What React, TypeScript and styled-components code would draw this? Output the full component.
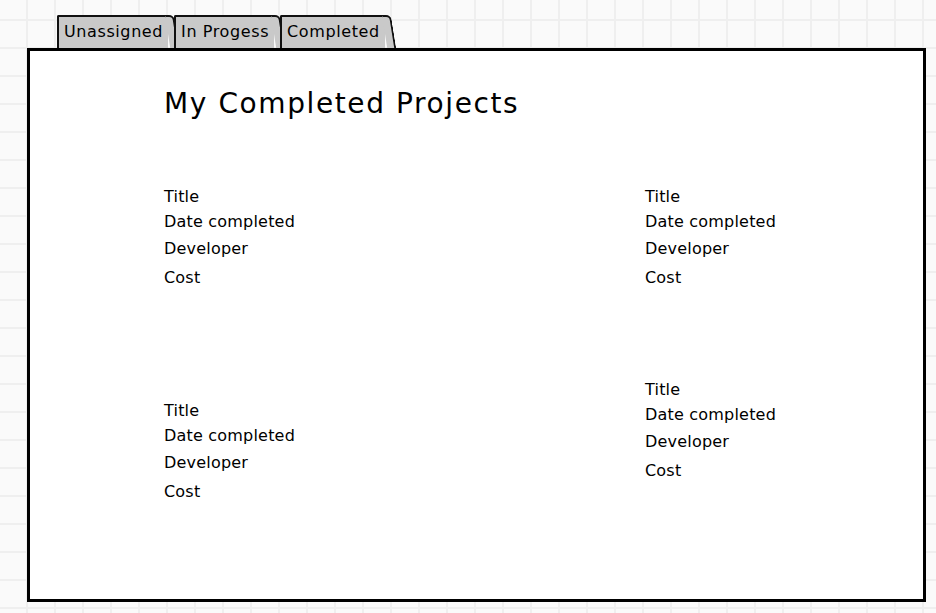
import React from "react";
import styled, { createGlobalStyle } from "styled-components";

const GlobalStyle = createGlobalStyle`
  html, body {
    margin: 0;
    padding: 0;
  }
  body {
    width: 936px;
    height: 613px;
    overflow: hidden;
    background-color: #fafafa;
    background-image:
      linear-gradient(to right, #efefef 2px, transparent 2px),
      linear-gradient(to bottom, #efefef 2px, transparent 2px);
    background-size: 28px 28px;
    background-position: 26px 19px;
    font-family: "DejaVu Sans", "Liberation Sans", sans-serif;
    color: #000;
  }
`;

const Page = styled.div`
  display: flex;
  flex-direction: column;
  padding: 15px 0 0 27px;
`;

const TabBar = styled.div`
  display: flex;
  gap: 2px;
  padding-left: 30px;
  height: 34px;
`;

const Tab = styled.div`
  position: relative;
  display: flex;
  align-items: center;
  height: 100%;
  box-sizing: border-box;
  padding: 0 5px 3px 5px;
  margin-right: 4px;
  background: #c9c9c9;
  border-left: 2px solid #111;
  border-top: 2px solid #111;
  border-top-left-radius: 2px;
  font-size: 16px;
  letter-spacing: 0.6px;
  white-space: nowrap;

  &::after {
    content: "";
    position: absolute;
    top: -2px;
    bottom: 0;
    right: -6px;
    width: 7px;
    background: #c9c9c9;
    border-top: 2px solid #111;
    border-right: 2px solid #111;
    border-top-right-radius: 5px;
    transform: skewX(9deg);
    transform-origin: top left;
  }
`;

const Panel = styled.div`
  position: relative;
  width: 899px;
  height: 554px;
  box-sizing: border-box;
  margin-top: -1px;
  background: #fff;
  border: 3px solid #000;
  padding: 33px 0 0 134px;
`;

const Heading = styled.h1`
  margin: 0;
  font-size: 28px;
  font-weight: 400;
  line-height: 40px;
  letter-spacing: 1.6px;
`;

const CardGrid = styled.div`
  display: grid;
  grid-template-columns: 481px 1fr;
  grid-auto-rows: 193px;
  margin-top: 60px;
`;

const Card = styled.div<{ $offset?: number }>`
  display: flex;
  flex-direction: column;
  margin-top: ${(p) => p.$offset ?? 0}px;
`;

const Field = styled.div<{ $gap?: number }>`
  font-size: 16px;
  line-height: 25px;
  letter-spacing: 0.2px;
  margin-top: ${(p) => p.$gap ?? 0}px;
  white-space: nowrap;
`;

const fields = [
  { label: "Title", gap: 0 },
  { label: "Date completed", gap: 0 },
  { label: "Developer", gap: 2 },
  { label: "Cost", gap: 4 },
];

const offsets = [0, 0, 21, 0];

export default function App() {
  return (
    <Page>
      <GlobalStyle />
      <TabBar>
        <Tab>Unassigned</Tab>
        <Tab>In Progess</Tab>
        <Tab>Completed</Tab>
      </TabBar>
      <Panel>
        <Heading>My Completed Projects</Heading>
        <CardGrid>
          {offsets.map((offset, i) => (
            <Card key={i} $offset={offset}>
              {fields.map((f) => (
                <Field key={f.label} $gap={f.gap}>
                  {f.label}
                </Field>
              ))}
            </Card>
          ))}
        </CardGrid>
      </Panel>
    </Page>
  );
}
